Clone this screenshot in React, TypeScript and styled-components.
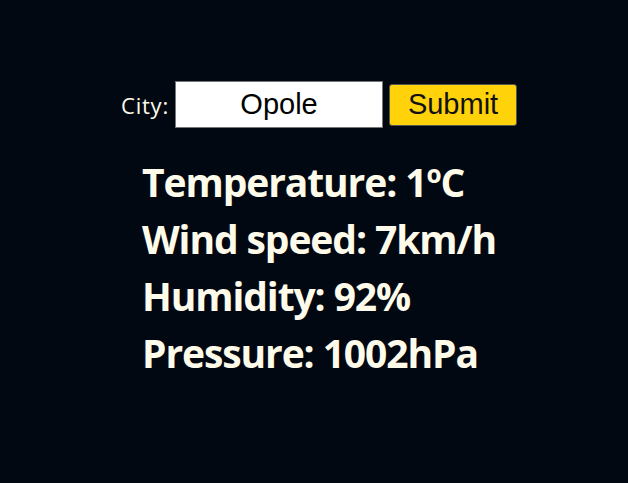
import React, { useState } from "react";
import styled, { createGlobalStyle } from "styled-components";

const GlobalStyle = createGlobalStyle`
  html, body {
    margin: 0;
    padding: 0;
    background: #020812;
  }
  #root {
    min-height: 100vh;
  }
`;

const Page = styled.main`
  min-height: 100vh;
  box-sizing: border-box;
  background: #020812;
  display: flex;
  flex-direction: column;
  align-items: center;
  padding: 81px 0 0 10px;
  font-family: "Open Sans", sans-serif;
  color: #fffbea;
`;

const Form = styled.form`
  display: flex;
  align-items: center;
  gap: 6px;
`;

const Label = styled.label`
  font-size: 22px;
  font-weight: 500;
  letter-spacing: 0.8px;
  color: #fffbea;
`;

const CityInput = styled.input`
  box-sizing: border-box;
  width: 208px;
  height: 47px;
  border: 1px solid #767676;
  background: #ffffff;
  text-align: center;
  font-family: "Liberation Sans", Arial, sans-serif;
  font-size: 29px;
  color: #000000;
  padding: 0 4px;
  outline: none;
`;

const SubmitButton = styled.button`
  box-sizing: border-box;
  width: 128px;
  height: 42px;
  background: #ffd20a;
  border: 1px solid #555555;
  border-radius: 3px;
  font-family: "Liberation Sans", Arial, sans-serif;
  font-size: 29px;
  color: #111111;
  padding: 0;
`;

const Info = styled.section`
  display: flex;
  flex-direction: column;
  margin-top: 25px;
`;

const InfoLine = styled.p`
  margin: 0;
  font-size: 39px;
  font-weight: 700;
  line-height: 57px;
  letter-spacing: -1.1px;
  color: #fffbea;
`;

export default function App() {
  const [city, setCity] = useState("Opole");
  return (
    <>
      <GlobalStyle />
      <Page>
        <Form onSubmit={(e) => e.preventDefault()}>
          <Label htmlFor="city">City:</Label>
          <CityInput id="city" value={city} onChange={(e) => setCity(e.target.value)} />
          <SubmitButton type="submit">Submit</SubmitButton>
        </Form>
        <Info>
          <InfoLine>Temperature: 1ºC</InfoLine>
          <InfoLine>Wind speed: 7km/h</InfoLine>
          <InfoLine>Humidity: 92%</InfoLine>
          <InfoLine>Pressure: 1002hPa</InfoLine>
        </Info>
      </Page>
    </>
  );
}
